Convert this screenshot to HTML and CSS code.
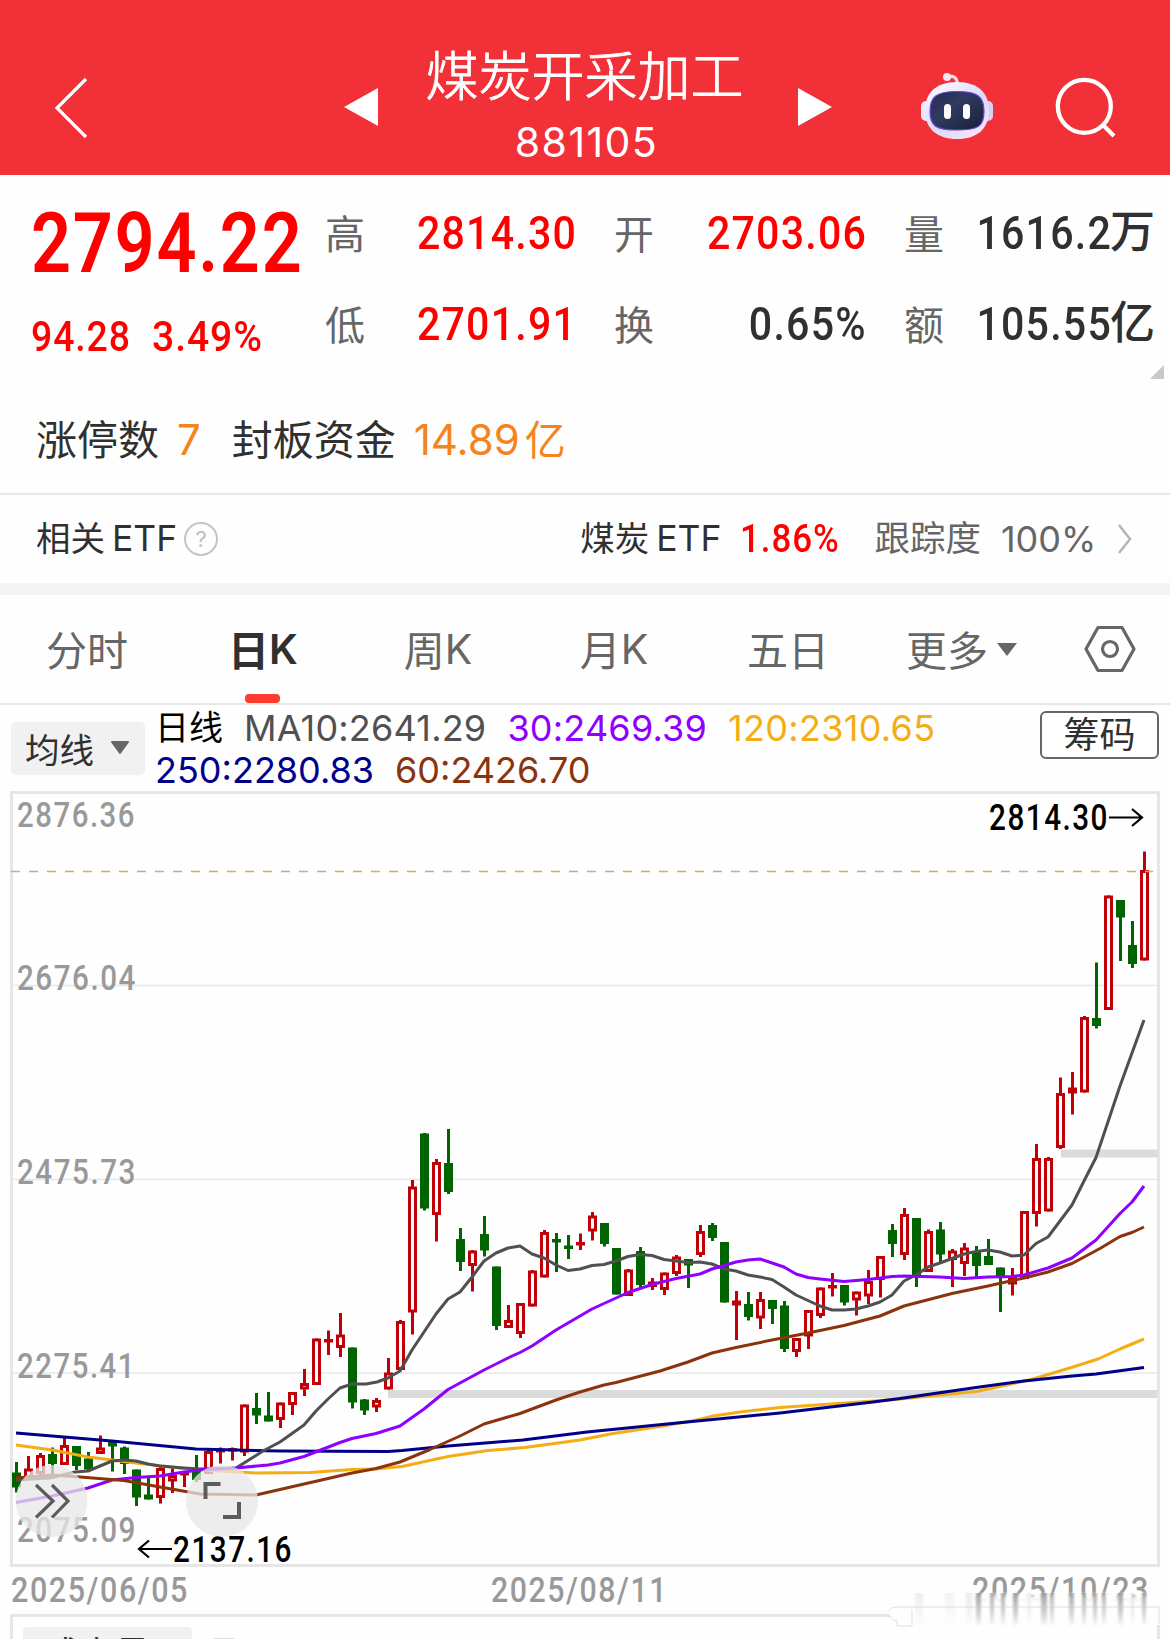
FILE: index.html
```html
<!DOCTYPE html>
<html lang="zh-CN">
<head>
<meta charset="utf-8">
<title>煤炭开采加工 881105</title>
<link rel="stylesheet" href="styles.css">
</head>
<body>
<header class="topbar">
  <svg class="back" width="36" height="64" viewBox="0 0 36 64"><path d="M33 3 4 32l29 29" fill="none" stroke="#fff" stroke-width="3.2"/></svg>
  <svg class="prev" width="34" height="38" viewBox="0 0 34 38"><path d="M34 0v38L0 19z" fill="#fff"/></svg>
  <div class="title"><h1>煤炭开采加工</h1><p>881105</p></div>
  <svg class="next" width="34" height="38" viewBox="0 0 34 38"><path d="M0 0v38l34-19z" fill="#fff"/></svg>
  <svg class="robot" width="74" height="68" viewBox="920 72 74 68">
    <defs>
      <linearGradient id="shell" x1="0" y1="0" x2=".7" y2="1"><stop offset="0" stop-color="#fff"/><stop offset=".6" stop-color="#dcd9fa"/><stop offset="1" stop-color="#f5e3f6"/></linearGradient>
      <linearGradient id="face" x1="0" y1="0" x2="1" y2="1"><stop offset="0" stop-color="#252b4d"/><stop offset=".4" stop-color="#303b60"/><stop offset="1" stop-color="#171e3b"/></linearGradient>
    </defs>
    <path d="M948 77c6-2 9 1 9.500 7" fill="none" stroke="#f8dcea" stroke-width="3"/>
    <circle cx="947" cy="77" r="4" fill="#f6e4f1"/>
    <rect x="921" y="101" width="12" height="20" rx="5" fill="#eceaff"/><rect x="981" y="101" width="12" height="20" rx="5" fill="#d5d0f5"/>
    <path d="M957 82c22 0 32 12 32 28 0 19-12 29-32 29s-32-10-32-29c0-16 10-28 32-28z" fill="url(#shell)"/>
    <path d="M957 91.500c21 0 27 5 27 20s-6 18.500-27 18.500-27-4-27-18.500 6-20 27-20z" fill="url(#face)" stroke="#6b48d8" stroke-width="1.200"/>
    <rect x="944" y="104" width="7" height="15" rx="3.500" fill="#fff"/><rect x="963" y="104" width="7" height="15" rx="3.500" fill="#fff"/>
  </svg>
  <svg class="search" width="62" height="62" viewBox="1055 77 62 62"><g fill="none" stroke="#fff" stroke-width="4.300"><circle cx="1084.300" cy="106.300" r="26.500"/><path d="m1103 125 11 11"/></g></svg>
</header>

<section class="quote">
  <div class="last"><b class="din price">2794.22</b><div class="change"><span class="din">94.28</span><span class="din pct">3.49%</span></div></div>
  <dl class="stats">
    <div><dt>高</dt><dd class="din up"><span>2814.30</span></dd></div>
    <div><dt>开</dt><dd class="din up"><span>2703.06</span></dd></div>
    <div><dt>量</dt><dd class="din"><span>1616.2</span><i>万</i></dd></div>
    <div><dt>低</dt><dd class="din up"><span>2701.91</span></dd></div>
    <div><dt>换</dt><dd class="din"><span>0.65%</span></dd></div>
    <div><dt>额</dt><dd class="din"><span>105.55</span><i>亿</i></dd></div>
  </dl>
  <svg class="corner" width="14" height="14" viewBox="0 0 14 14"><path d="M14 0v14H0z" fill="#c8c8c8"/></svg>
</section>

<section class="limit"><span>涨停数</span><em class="cnt">7</em><span>封板资金</span><em class="amt">14.89<i>亿</i></em></section>

<section class="etf">
  <span class="etf-name">相关<i>ETF</i></span>
  <svg class="help" width="36" height="36" viewBox="0 0 36 36"><circle cx="18" cy="18" r="16" fill="none" stroke="#c4c4c4" stroke-width="2"/><text x="18" y="26" text-anchor="middle" font-family="Inter" font-size="22" fill="#c0c0c0">?</text></svg>
  <span class="etf-name related">煤炭<i>ETF</i></span>
  <span class="din etf-pct">1.86%</span>
  <span class="track">跟踪度</span><span class="track-val">100%</span>
  <svg class="more" width="16" height="32" viewBox="0 0 16 32"><path d="m2 2 11 14L2 30" fill="none" stroke="#b4b4b4" stroke-width="2.500"/></svg>
</section>

<nav class="tabs">
  <a class="tab">分时</a><a class="tab active">日<i>K</i></a><a class="tab">周<i>K</i></a><a class="tab">月<i>K</i></a><a class="tab">五日</a>
  <a class="tab">更多<svg width="20" height="13" viewBox="0 0 20 13"><path d="M0 0h20L10 13z" fill="#666"/></svg></a>
  <svg class="gear" width="54" height="48" viewBox="0 0 54 48"><g fill="none" stroke="#666" stroke-width="3.200" stroke-linejoin="round"><path d="M15 2.500h24L51 24 39 45.500H15L3 24z"/><circle cx="27" cy="24" r="7.500"/></g></svg>
</nav>

<section class="legend">
  <button class="pick">均线<svg width="20" height="14" viewBox="0 0 20 14"><path d="M2 1h16L10 12z" fill="#666" stroke="#666" stroke-width="2" stroke-linejoin="round"/></svg></button>
  <div class="values">
    <p><b>日线</b><span class="ma10">MA10:2641.29</span><span class="ma30">30:2469.39</span><span class="ma120">120:2310.65</span></p>
    <p><span class="ma250">250:2280.83</span><span class="ma60">60:2426.70</span></p>
  </div>
  <button class="chips">筹码</button>
</section>

<svg class="chart" width="1170" height="853" viewBox="0 786 1170 853">
  <defs>
    <linearGradient id="veil" x1="0" y1="0" x2="0" y2="1"><stop offset="0" stop-color="#fefefe" stop-opacity="0"/><stop offset=".5" stop-color="#fefefe" stop-opacity=".9"/><stop offset="1" stop-color="#fefefe"/></linearGradient>
    <linearGradient id="fade" x1="0" y1="0" x2="0" y2="1"><stop offset="0" stop-color="#999"/><stop offset=".6" stop-color="#aaa" stop-opacity=".6"/><stop offset="1" stop-color="#aaa" stop-opacity=".05"/></linearGradient>
    <filter id="soft" x="-5%" width="110%"><feGaussianBlur stdDeviation="1.300 .5"/></filter>
  </defs>
  <g class="grid"><path d="M12 985.500H1158M12 1179.500H1158M12 1373H1158"/></g>
  <rect class="frame" x="11.500" y="792.500" width="1147" height="773"/>
  <path class="gap" d="M388 1394H1157M1061 1153.500H1158"/>
  <g class="axis">
    <text x="17" y="827" textLength="119" lengthAdjust="spacingAndGlyphs">2876.36</text>
    <text x="17" y="990" textLength="120" lengthAdjust="spacingAndGlyphs">2676.04</text>
    <text x="17" y="1184" textLength="120" lengthAdjust="spacingAndGlyphs">2475.73</text>
    <text x="17" y="1378" textLength="119" lengthAdjust="spacingAndGlyphs">2275.41</text>
    <text x="17" y="1542" textLength="120" lengthAdjust="spacingAndGlyphs">2075.09</text>
    <text x="11" y="1602" textLength="178" lengthAdjust="spacingAndGlyphs">2025/06/05</text>
    <text x="491" y="1602" textLength="177" lengthAdjust="spacingAndGlyphs">2025/08/11</text>
    <text x="972" y="1602" textLength="178" lengthAdjust="spacingAndGlyphs">2025/10/23</text>
  </g>
  <rect x="965" y="1591" width="190" height="14" fill="url(#veil)"/>
  <g id="candles"></g>
  <path class="now" d="M11 871.500H1153"/>
  <g id="lines"></g>
  <g class="mark">
    <text x="989" y="830" textLength="120" lengthAdjust="spacingAndGlyphs">2814.30</text><text x="173" y="1562" textLength="120" lengthAdjust="spacingAndGlyphs">2137.16</text>
    <path d="M1109 817.500h33m-10-8.500 10 8.500-10 8.500M172 1549h-33m10-8.500-10 8.500 10 8.500"/>
  </g>
  <g class="float"><circle cx="51.500" cy="1501" r="36"/><circle cx="222" cy="1501" r="36"/>
    <path d="m36 1485 17 16-17 16.500m16-32.500 16 16-16 16.500"/><path class="thick" d="M205.500 1499v-15h15M239 1502v15h-16"/></g>
  <path class="frame" d="M11.500 1639v-23.500H890M1158.500 1625v14"/>
  <g id="smear" filter="url(#soft)"></g>
  <path d="M889 1611q1-4 8-4h262v17M890 1616q2 5 7 5v5h15v-16" fill="none" stroke="#ccc" stroke-width="1" opacity=".6"/>
  <rect x="23" y="1627" width="169" height="20" rx="4" fill="#f1f1f1"/>
  <text x="45" y="1667" class="vol">成交量</text><path d="M214 1638.500h20" stroke="#ddd"/>
</svg>
<script src="chart.js"></script>
</body>
</html>
```
FILE: styles.css
```css
* { box-sizing: border-box; margin: 0; padding: 0; }
body { width: 1170px; height: 1639px; overflow: hidden; background: #fefefe; color: #303030; font-family: Inter, "Noto Sans CJK SC", sans-serif; }
i, em { font-style: normal; }
svg { display: block; flex: none; }
button { font: inherit; color: #303030; }

.topbar { height: 175px; background: #f23037; display: flex; align-items: flex-start; color: #fff; padding-left: 53px; }
.back { margin-top: 76px; }
.prev { margin: 88px 0 0 255px; }
.title { width: 420px; height: 175px; text-align: center; padding: 42px 7px 0 0; }
.title h1 { font: 300 53px/62px "Noto Sans CJK SC", sans-serif; -webkit-text-stroke: .9px #fff; }
.title p { font-size: 41px; line-height: 46px; margin-top: 15px; padding-left: 4px; letter-spacing: 1.400px; }
.next { margin-top: 88px; }
.robot { margin: 72px 0 0 88px; }
.search { margin: 77px 0 0 61px; }

.din { font-family: Roboto, "Noto Sans CJK SC", sans-serif; font-weight: 500; white-space: nowrap; }
.quote { height: 205px; display: flex; position: relative; }
.last { width: 325px; padding: 27px 0 0 31px; color: #f00; }
.price { display: block; width: 330px; font-size: 83px; line-height: 84px; font-weight: 600; letter-spacing: 2px; transform: scaleX(.846); transform-origin: left; }
.change { display: flex; font-size: 43px; line-height: 50px; margin-top: 25px; letter-spacing: 1px; }
.change span { width: 121px; transform: scaleX(.87); transform-origin: left; }
.change .pct { transform: scaleX(.91); }
.stats { display: grid; grid-template-columns: 250px 251px 249px; column-gap: 39px; grid-template-rows: 91px 91px; padding-top: 14px; }
.stats div { display: flex; justify-content: space-between; align-items: center; height: 91px; }
.stats dt { font: 400 40px/50px "Noto Sans CJK SC", sans-serif; color: #666; padding-bottom: 5px; }
.stats dd { display: flex; justify-content: flex-end; font-size: 47px; line-height: 50px; padding-bottom: 4px; }
.stats dd span { letter-spacing: 1.400px; transform: scaleX(.875); transform-origin: right; margin-right: -2px; }
.stats dd.up { color: #f00; }
.stats i { font-size: 45px; line-height: 50px; margin-right: -2px; }
.corner { position: absolute; right: 6px; bottom: 1px; }

.limit { height: 115px; border-bottom: 2px solid #e9e9e9; display: flex; align-items: center; padding: 7px 0 0 36px; font-size: 41px; line-height: 50px; }
.limit em { color: #f5841f; font-size: 42px; }
.cnt { margin: 0 31px 0 18px; }
.amt { margin-left: 18px; display: flex; gap: 5px; }
.amt i { font-size: 41px; }

.etf { height: 88px; display: flex; align-items: center; padding: 0 0 1px 36px; font-size: 34.500px; line-height: 44px; }
.etf-name { display: flex; align-items: baseline; gap: 7px; }
.etf-name i { font-size: 35.500px; }
.help { margin: 0 0 0 6px; }
.related { margin-left: 361px; }
.etf-pct { width: 98px; font-size: 38px; color: #f00; margin: 1px 0 0 19px; letter-spacing: 1px; transform: scaleX(.92); transform-origin: left; }
.track { color: #666; margin-left: 36px; font-size: 35.500px; }
.track-val { color: #666; margin-left: 20px; font-size: 36px; }
.more { margin: 0 0 0 21px; }

.tabs { height: 122px; border-top: 12px solid #f4f4f4; border-bottom: 2px solid #e6e6e6; display: grid; grid-template-columns: 174px 178px 172px 180px 168px 212px 86px; align-items: center; font-size: 41px; color: #666; }
.tab { height: 108px; display: flex; align-items: center; justify-content: center; padding-bottom: 3px; position: relative; }
.tab i { padding-top: 3px; }
.tab:nth-child(6) { padding-right: 33px; }
.tab svg { margin: 3px 0 0 9px; }
.tab.active { color: #303030; font-weight: 600; }
.tab.active::after { content: ""; position: absolute; left: 71px; bottom: 0; width: 35px; height: 9px; border-radius: 4px; background: #ff3b30; }
.gear { margin-left: -1px; }

.legend { height: 81px; display: flex; align-items: flex-start; padding-left: 11px; }
.pick { width: 134px; height: 53px; margin-top: 17px; border: 0; border-radius: 5px; background: #f1f1f1; display: flex; align-items: center; gap: 16px; padding: 0 0 2px 14px; font-size: 34.500px; }
.values { width: 895px; padding: 2px 0 0 10px; }
.values p { height: 42px; display: flex; align-items: center; gap: 21px; font-size: 36px; line-height: 42px; }
.values p span { white-space: nowrap; }
.values b { font-weight: 400; font-size: 34px; color: #000; }
.ma10 { color: #505050; letter-spacing: .2px; } .ma30 { color: #8f00ff; letter-spacing: .2px; } .ma120 { color: #f5ad14; letter-spacing: .3px; } .ma250 { color: #00008b; } .ma60 { color: #8b330c; }
.chips { width: 119px; height: 48px; margin-top: 6px; border: 2px solid #666; border-radius: 6px; background: #fff; font-size: 36px; line-height: 42px; }

.grid { stroke: #e8e8e8; stroke-width: 1.500; }
.frame { fill: none; stroke: #e6e6e6; stroke-width: 3; }
.gap { stroke: #dbdbdb; stroke-width: 8; }
.axis text { font: 500 35px Roboto, sans-serif; letter-spacing: 1.800px; fill: #999; }
.mark text { font: 500 36px Roboto, sans-serif; letter-spacing: 1.800px; fill: #000; }
.mark path { fill: none; stroke: #000; stroke-width: 2.200; }
.now { stroke: #dba66a; stroke-width: 1.700; stroke-dasharray: 9 9; }
.up-candle { fill: #fff; stroke: #c00006; stroke-width: 3; }
.down-candle { fill: #006400; stroke: #006400; stroke-width: 3; }
.ma { fill: none; stroke-width: 3; stroke-linejoin: round; }
.float circle { fill: #e7e7e7; fill-opacity: .76; }
.float path { fill: none; stroke: #5c5c5c; stroke-width: 3.200; }
.float .thick { stroke-width: 4; }
.vol { font: 35px "Noto Sans CJK SC", sans-serif; fill: #303030; }
```
FILE: chart.js
```js
// One candle per trading day: direction, high, body top, body bottom, low (chart y units).
const candles = `G 1462 1472.5 1487.5 1492.5|R 1456 1468.5 1478 1478|R 1453 1455 1474 1475|G 1447.5 1454 1464 1475|R 1436 1445 1465 1465|G 1446 1446 1466 1470|G 1452 1458.5 1469.5 1471|R 1435.5 1447.5 1454 1454|G 1440.5 1440.5 1446.5 1471.5|G 1446.5 1447.5 1464 1474|G 1469.5 1469.5 1497.5 1506|G 1477.5 1494.5 1499.5 1499.5|R 1467 1468 1498 1503.5|R 1468 1475 1481.5 1493|R 1471 1472 1475 1487|G 1455 1470 1480 1482|R 1449 1451 1474 1474|R 1447.5 1449 1451 1463.5|R 1447.5 1448 1451 1460.5|R 1404.5 1404.5 1452.5 1456|G 1393 1408 1415.5 1424|G 1392 1415.5 1421.5 1421.5|R 1402.5 1402.5 1420 1428|R 1392 1392 1405 1415|R 1369 1383 1389.5 1396|R 1338.5 1338.5 1385 1385|R 1330.5 1339 1342 1355|R 1313 1334.5 1348 1357|G 1347.5 1347.5 1402.5 1408.5|G 1399 1399.5 1410.5 1415|R 1398 1400 1407.5 1412|R 1358 1372.5 1389.5 1389.5|R 1320 1321 1370 1370|R 1180 1186.5 1312.5 1334.5|G 1133 1133.5 1208.5 1210.5|R 1159 1162 1215 1241.5|G 1129 1163 1192 1194|G 1228 1239 1262 1271|R 1250 1250.5 1266 1291.5|G 1216 1234 1250.5 1256.5|G 1266.5 1266.5 1326 1330|R 1305 1320 1328 1328|R 1303 1303 1334 1338|R 1270 1270.5 1306.5 1306.5|R 1230 1232 1277.5 1277.5|G 1233 1239 1242 1272|G 1235 1245.5 1249 1259|R 1233.5 1242 1245 1250|R 1212 1215.5 1231.5 1240.5|G 1223 1223 1244 1246.5|G 1248 1248 1294.5 1294.5|R 1269 1269.5 1296 1296|G 1247 1251 1285 1288.5|R 1278 1281.5 1287 1290|R 1272.5 1272.5 1290 1295|R 1255 1256.5 1274 1276|G 1259 1259 1265.5 1288|R 1225 1231 1255 1257|G 1223 1225 1238 1241|G 1242 1242 1302.5 1302.5|R 1291 1300.5 1305.5 1340|G 1292 1304 1317 1320.5|R 1292 1299 1318.5 1329|G 1300 1300 1309 1324|G 1301 1305.5 1349 1352|R 1338 1338 1352 1357|R 1310 1310 1336.5 1349|R 1287.5 1287.5 1316 1318|R 1273 1285 1288 1296.5|G 1285 1285 1302.5 1305.5|R 1291.5 1291.5 1300.5 1315.5|R 1270 1281 1296.5 1304|R 1256 1256 1280 1297.5|G 1224 1230 1244 1257|R 1208 1214 1255 1260|G 1218 1218 1276 1287|R 1229.5 1231 1272 1272|G 1222 1229.5 1254.5 1263|R 1249 1250.5 1260 1287|R 1243 1247.5 1264 1276|G 1246 1251.5 1266 1277|G 1239 1256 1265 1265|G 1267.5 1267.5 1277 1312|R 1268 1277 1284.5 1295.5|R 1211 1211 1279 1279|R 1144 1158 1214 1226.5|R 1157 1158 1211.5 1211.5|R 1077.5 1093 1148 1149|R 1072 1087.5 1093.5 1114.5|R 1016 1017 1092.5 1092.5|G 962.5 1018 1026 1028.5|R 895.5 895.5 1010 1010|G 900 900 917.5 961|G 921 945 964 968|R 851.5 870 960.5 960.5`;

const body = candles.split('|').map((row, i) => {
  const [dir, ...v] = row.split(' ');
  const [high, top, bottom, low] = v.map(Number);
  const x = 16.5 + i * 12;
  const cls = dir === 'R' ? 'up-candle' : 'down-candle';
  const h = Math.max(bottom - top - 3, 0.5);
  return `<g class="${cls}"><path d="M${x} ${high}V${top + 1}M${x} ${bottom - 1}V${low}"/><rect x="${x - 3}" y="${top + 1.5}" width="6" height="${h}"/></g>`;
});
document.getElementById('candles').innerHTML = body.join('');

const averages = {
  '#f5ad14': '16,1445 52,1450 88,1457 136,1463 184,1468.5 220,1471 256,1473 310,1472.5 352,1469.5 376,1469 402,1466.5 448,1456.5 488,1450.5 525,1447.5 580,1440 613,1433.5 663,1426 697,1420 713,1416 740,1412 780,1407.5 860,1402 900,1399 976,1391.5 1000,1386.5 1033,1379 1073,1367 1098,1359 1120,1349 1144,1339',
  '#00008b': '16,1433 112,1441 196,1449 280,1451 388,1451.5 402,1450.5 448,1446 523,1440 587,1432 687,1422 780,1413 873,1402 900,1398.5 976,1387.5 1024,1381 1072,1376 1096,1374 1144,1367.5',
  '#505050': '16,1480 50,1478 75,1472 88,1471 100,1466 112,1461 124,1460 136,1461 148,1464 160,1466 172,1467 184,1468 200,1469 236,1468 263,1451 280,1442 304,1425 316,1411 328,1399 340,1388 352,1384 366,1384 377,1382 388,1378 400,1371 412,1350 424,1332 436,1314 448,1299 460,1292 472,1277 484,1261 496,1253 508,1248 520,1246 532,1254 544,1258 556,1265 568,1270.5 580,1269 592,1265.5 604,1264.5 616,1261 628,1256.5 640,1254.5 652,1255.5 664,1259.5 676,1261 688,1262.5 700,1262 712,1264 724,1269 736,1271 748,1275 760,1277 772,1279.5 784,1287 796,1295 808,1300.5 820,1306 832,1310 844,1310 856,1309 868,1306 880,1302 892,1295 904,1281 916,1275 928,1267 940,1263 952,1258.5 964,1254 976,1251.5 988,1250 1000,1252 1012,1256 1024,1255 1036,1243.5 1048,1237 1060,1221 1072,1205 1084,1181 1096,1157.5 1120,1086 1144,1020',
  '#8f00ff': '16,1502.5 52,1496 88,1488 112,1480 136,1477.5 160,1476 184,1472 200,1470 236,1468 268,1465 280,1463 304,1456.5 340,1442.5 352,1438.5 376,1433.5 400,1426 424,1409 448,1389.5 484,1370 508,1358 520,1352.5 532,1346 556,1330 592,1309 628,1292.5 652,1284.5 676,1278.5 700,1274 712,1269 736,1262 748,1260 760,1259 784,1267 796,1274 808,1277.5 820,1279 844,1281.5 868,1279.5 892,1276.5 904,1276 940,1277 964,1278.5 988,1277 1012,1276.5 1024,1275 1048,1268 1072,1258 1096,1240 1120,1213.5 1132,1202 1144,1186',
  '#8b330c': '16,1478 52,1475 80,1477 124,1480.5 160,1487 200,1494 256,1495 304,1484 352,1473 376,1468.5 400,1462 430,1449.5 460,1436 484,1424 520,1413.5 556,1400 580,1392 604,1385 616,1382.5 660,1371 688,1362 712,1353 736,1347.5 772,1340 808,1333 844,1325.5 880,1316 904,1306 952,1293.5 988,1286 1024,1278 1048,1272 1072,1263.5 1100,1248.5 1120,1236.5 1132,1232.5 1144,1227'
};
document.getElementById('lines').innerHTML = Object.entries(averages)
  .map(([color, points]) => `<polyline class="ma" stroke="${color}" points="${points}"/>`).join('');

// Soft vertical streaks below the last date: x, width, opacity.
const streaks = [[915,8,.16],[945,10,.1],[966,6,.2],[976,5,.9],[990,4,.8],[1001,4,.8],[1013,5,.9],[1027,4,.2],[1041,6,.9],[1050,4,.7],[1069,5,.8],[1082,4,.8],[1093,4,.8],[1102,4,.7],[1118,5,.9],[1131,3,.3],[1142,4,.8]];
document.getElementById('smear').innerHTML = streaks
  .map(([x, w, o]) => `<rect x="${x}" y="1593" width="${w}" height="33" fill="url(#fade)" opacity="${o}"/>`).join('');
```
